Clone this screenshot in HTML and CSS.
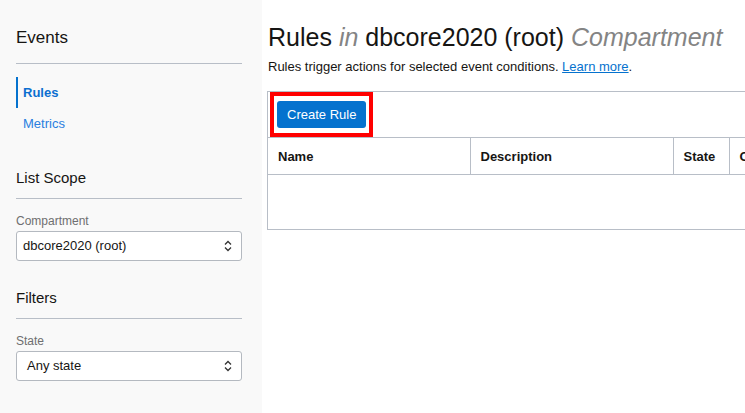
FILE: index.html
```html
<!DOCTYPE html>
<html lang="en">
<head>
<meta charset="utf-8">
<title>Rules</title>
<link rel="stylesheet" href="styles.css">
</head>
<body>
<div class="page">
  <aside class="sidebar">
    <h2 class="side-title">Events</h2>
    <nav class="side-nav">
      <a class="nav-item active" href="#">Rules</a>
      <a class="nav-item" href="#">Metrics</a>
    </nav>
    <h3 class="side-heading">List Scope</h3>
    <label class="field-label">Compartment</label>
    <div class="select">
      <span class="select-text">dbcore2020 (root)</span>
      <svg class="chev" width="8" height="16" viewBox="0 0 8 16"><polyline points="1,6.5 4,3.5 7,6.5" fill="none" stroke="#333" stroke-width="1.3"/><polyline points="1,9.5 4,12.5 7,9.5" fill="none" stroke="#333" stroke-width="1.3"/></svg>
    </div>
    <h3 class="side-heading filters">Filters</h3>
    <label class="field-label">State</label>
    <div class="select">
      <span class="select-text wide">Any state</span>
      <svg class="chev" width="8" height="16" viewBox="0 0 8 16"><polyline points="1,6.5 4,3.5 7,6.5" fill="none" stroke="#333" stroke-width="1.3"/><polyline points="1,9.5 4,12.5 7,9.5" fill="none" stroke="#333" stroke-width="1.3"/></svg>
    </div>
  </aside>
  <main class="main">
    <h1 class="title">Rules <em>in</em> dbcore2020 (root) <em>Compartment</em></h1>
    <p class="subtitle">Rules trigger actions for selected event conditions. <a href="#">Learn more</a>.</p>
    <div class="panel">
      <div class="toolbar">
        <button class="btn-primary">Create Rule</button>
        <span class="highlight"></span>
      </div>
      <table class="grid">
        <thead>
          <tr>
            <th class="c-name">Name</th>
            <th class="c-desc">Description</th>
            <th class="c-state">State</th>
            <th class="c-created">Created</th>
          </tr>
        </thead>
        <tbody>
          <tr class="empty"><td colspan="4"></td></tr>
        </tbody>
      </table>
    </div>
  </main>
</div>
</body>
</html>
```

FILE: styles.css
```css
* { box-sizing: border-box; }
html, body { margin: 0; padding: 0; }
body {
  width: 745px;
  height: 413px;
  overflow: hidden;
  background: #fff;
  font-family: "Liberation Sans", Arial, sans-serif;
  color: #161513;
}
.page { display: flex; height: 413px; }
.sidebar {
  width: 262px;
  flex: none;
  background: #f9f9f9;
  padding: 0 20px 0 16px;
}
.side-title {
  margin: 28px 0 0;
  font-size: 17px;
  line-height: 20px;
  font-weight: normal;
  padding-bottom: 15px;
  border-bottom: 1px solid #b8bec7;
}
.side-nav { margin-top: 13px; display: flex; flex-direction: column; }
.nav-item {
  display: block;
  font-size: 13px;
  padding-left: 7px;
  color: #2a7fe0;
  text-decoration: none;
  height: 32px;
  line-height: 32px;
}
.nav-item.active {
  height: 31px;
  line-height: 31px;
  font-weight: bold;
  color: #0b6fd0;
  border-left: 2px solid #0572ce;
  padding-left: 5px;
}
.side-heading {
  margin: 29px 0 0;
  font-size: 15px;
  line-height: 18px;
  font-weight: normal;
  padding-bottom: 11px;
  border-bottom: 1px solid #b8bec7;
}
.side-heading.filters { margin-top: 28px; }
.field-label {
  display: block;
  margin-top: 15px;
  font-size: 12px;
  line-height: 14px;
  color: #6f6f70;
}
.select {
  margin-top: 3px;
  height: 30px;
  border: 1px solid #b4b9c0;
  border-radius: 3px;
  background: #fff;
  display: flex;
  align-items: center;
  justify-content: space-between;
  padding: 0 9px 0 6px;
}
.select-text { font-size: 13px; line-height: 28px; color: #161513; }
.select-text.wide { padding-left: 4px; }
.chev { display: block; }
.main {
  flex: none;
  width: 700px;
  padding-left: 5px;
}
.title {
  margin: 22px 0 0 1px;
  font-size: 25px;
  line-height: 30px;
  font-weight: normal;
  color: #161513;
  white-space: nowrap;
}
.title em { color: #848484; }
.subtitle {
  margin: 7px 0 0 1px;
  font-size: 13px;
  line-height: 16px;
  color: #161513;
}
.subtitle a { color: #0572ce; }
.panel {
  margin-top: 16px;
  width: 640px;
  border-top: 1px solid #b8bec7;
  border-left: 1px solid #b8bec7;
  background: #fff;
}
.toolbar {
  position: relative;
  padding: 9px;
  height: 45px;
}
.btn-primary {
  display: block;
  height: 27px;
  padding: 0 10px;
  border: none;
  border-radius: 3px;
  background: #0572ce;
  color: #fff;
  font-family: "Liberation Sans", Arial, sans-serif;
  font-size: 13px;
}
.highlight {
  position: absolute;
  left: 2px;
  top: 0;
  width: 103px;
  height: 45px;
  border: 4px solid #ff0000;
}
.grid {
  border-collapse: collapse;
  table-layout: fixed;
  width: 639px;
}
.grid th {
  height: 37px;
  border-top: 1px solid #b8bec7;
  border-bottom: 1px solid #b8bec7;
  border-right: 1px solid #b8bec7;
  text-align: left;
  font-size: 13px;
  font-weight: bold;
  padding: 0 0 0 10px;
  color: #161513;
}
.c-name { width: 202px; }
.c-desc { width: 203px; }
.c-state { width: 56px; }
.grid .empty td {
  height: 55px;
  border-bottom: 1px solid #b8bec7;
}
```
